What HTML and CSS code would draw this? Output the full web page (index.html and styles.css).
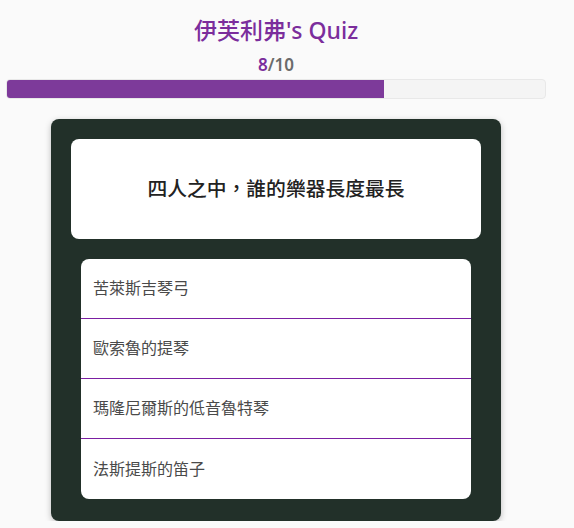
FILE: index.html
```html
<!DOCTYPE html>
<html lang="zh-TW">
<head>
<meta charset="utf-8">
<title>Quiz</title>
<link rel="stylesheet" href="styles.css">
</head>
<body>
<div class="page">
  <h1 class="title">伊芙利弗's Quiz</h1>
  <div class="score"><span class="score-now">8</span>/10</div>
  <div class="bar"><div class="bar-fill" style="width:70%"></div></div>
  <div class="card">
    <div class="question">四人之中，誰的樂器長度最長</div>
    <ul class="answers">
      <li class="answer">苦萊斯吉琴弓</li>
      <li class="answer">歐索魯的提琴</li>
      <li class="answer">瑪隆尼爾斯的低音魯特琴</li>
      <li class="answer">法斯提斯的笛子</li>
    </ul>
  </div>
</div>
</body>
</html>
```

FILE: styles.css
```css
* { box-sizing: border-box; }
html, body { margin: 0; padding: 0; }
body {
  background: #fafafa;
  font-family: "Noto Sans", "Noto Sans CJK TC", sans-serif;
  color: #333;
}
.page {
  width: 540px;
  margin-left: 6px;
  padding-top: 15px;
  display: flex;
  flex-direction: column;
  align-items: center;
}
.title {
  margin: 0;
  font-size: 23px;
  line-height: 30px;
  font-weight: 500;
  color: #7b2d9c;
  text-align: center;
}
.score {
  margin-top: 8px;
  font-size: 17px;
  line-height: 24px;
  font-weight: 600;
  color: #6b6b6b;
}
.score-now { color: #7b2d9c; }
.bar {
  margin-top: 2px;
  width: 540px;
  height: 20px;
  background: #f4f4f4;
  border: 1px solid #e8e8e8;
  border-radius: 4px;
  overflow: hidden;
}
.bar-fill {
  height: 100%;
  background: #7d3a9a;
}
.card {
  margin-top: 20px;
  width: 450px;
  background: #223029;
  border-radius: 8px;
  padding: 20px 20px 22px;
  box-shadow: 0 2px 6px rgba(0,0,0,0.25);
  display: flex;
  flex-direction: column;
  align-items: center;
}
.question {
  width: 410px;
  height: 100px;
  background: #fff;
  border-radius: 8px;
  display: flex;
  align-items: center;
  justify-content: center;
  padding-bottom: 3px;
  font-family: "Noto Sans CJK TC", sans-serif;
  font-size: 19.8px;
  font-weight: 500;
  color: #222;
}
.answers {
  list-style: none;
  margin: 20px 0 0;
  padding: 0;
  width: 390px;
  background: #fff;
  border-radius: 8px;
  overflow: hidden;
}
.answer {
  height: 60px;
  display: flex;
  align-items: center;
  padding-left: 12px;
  padding-bottom: 3px;
  font-family: "Noto Sans CJK TC", sans-serif;
  font-size: 16px;
  font-weight: 400;
  color: #4a4a4a;
  border-bottom: 1px solid #7b1fa2;
}
.answer:last-child { border-bottom: none; }
```
